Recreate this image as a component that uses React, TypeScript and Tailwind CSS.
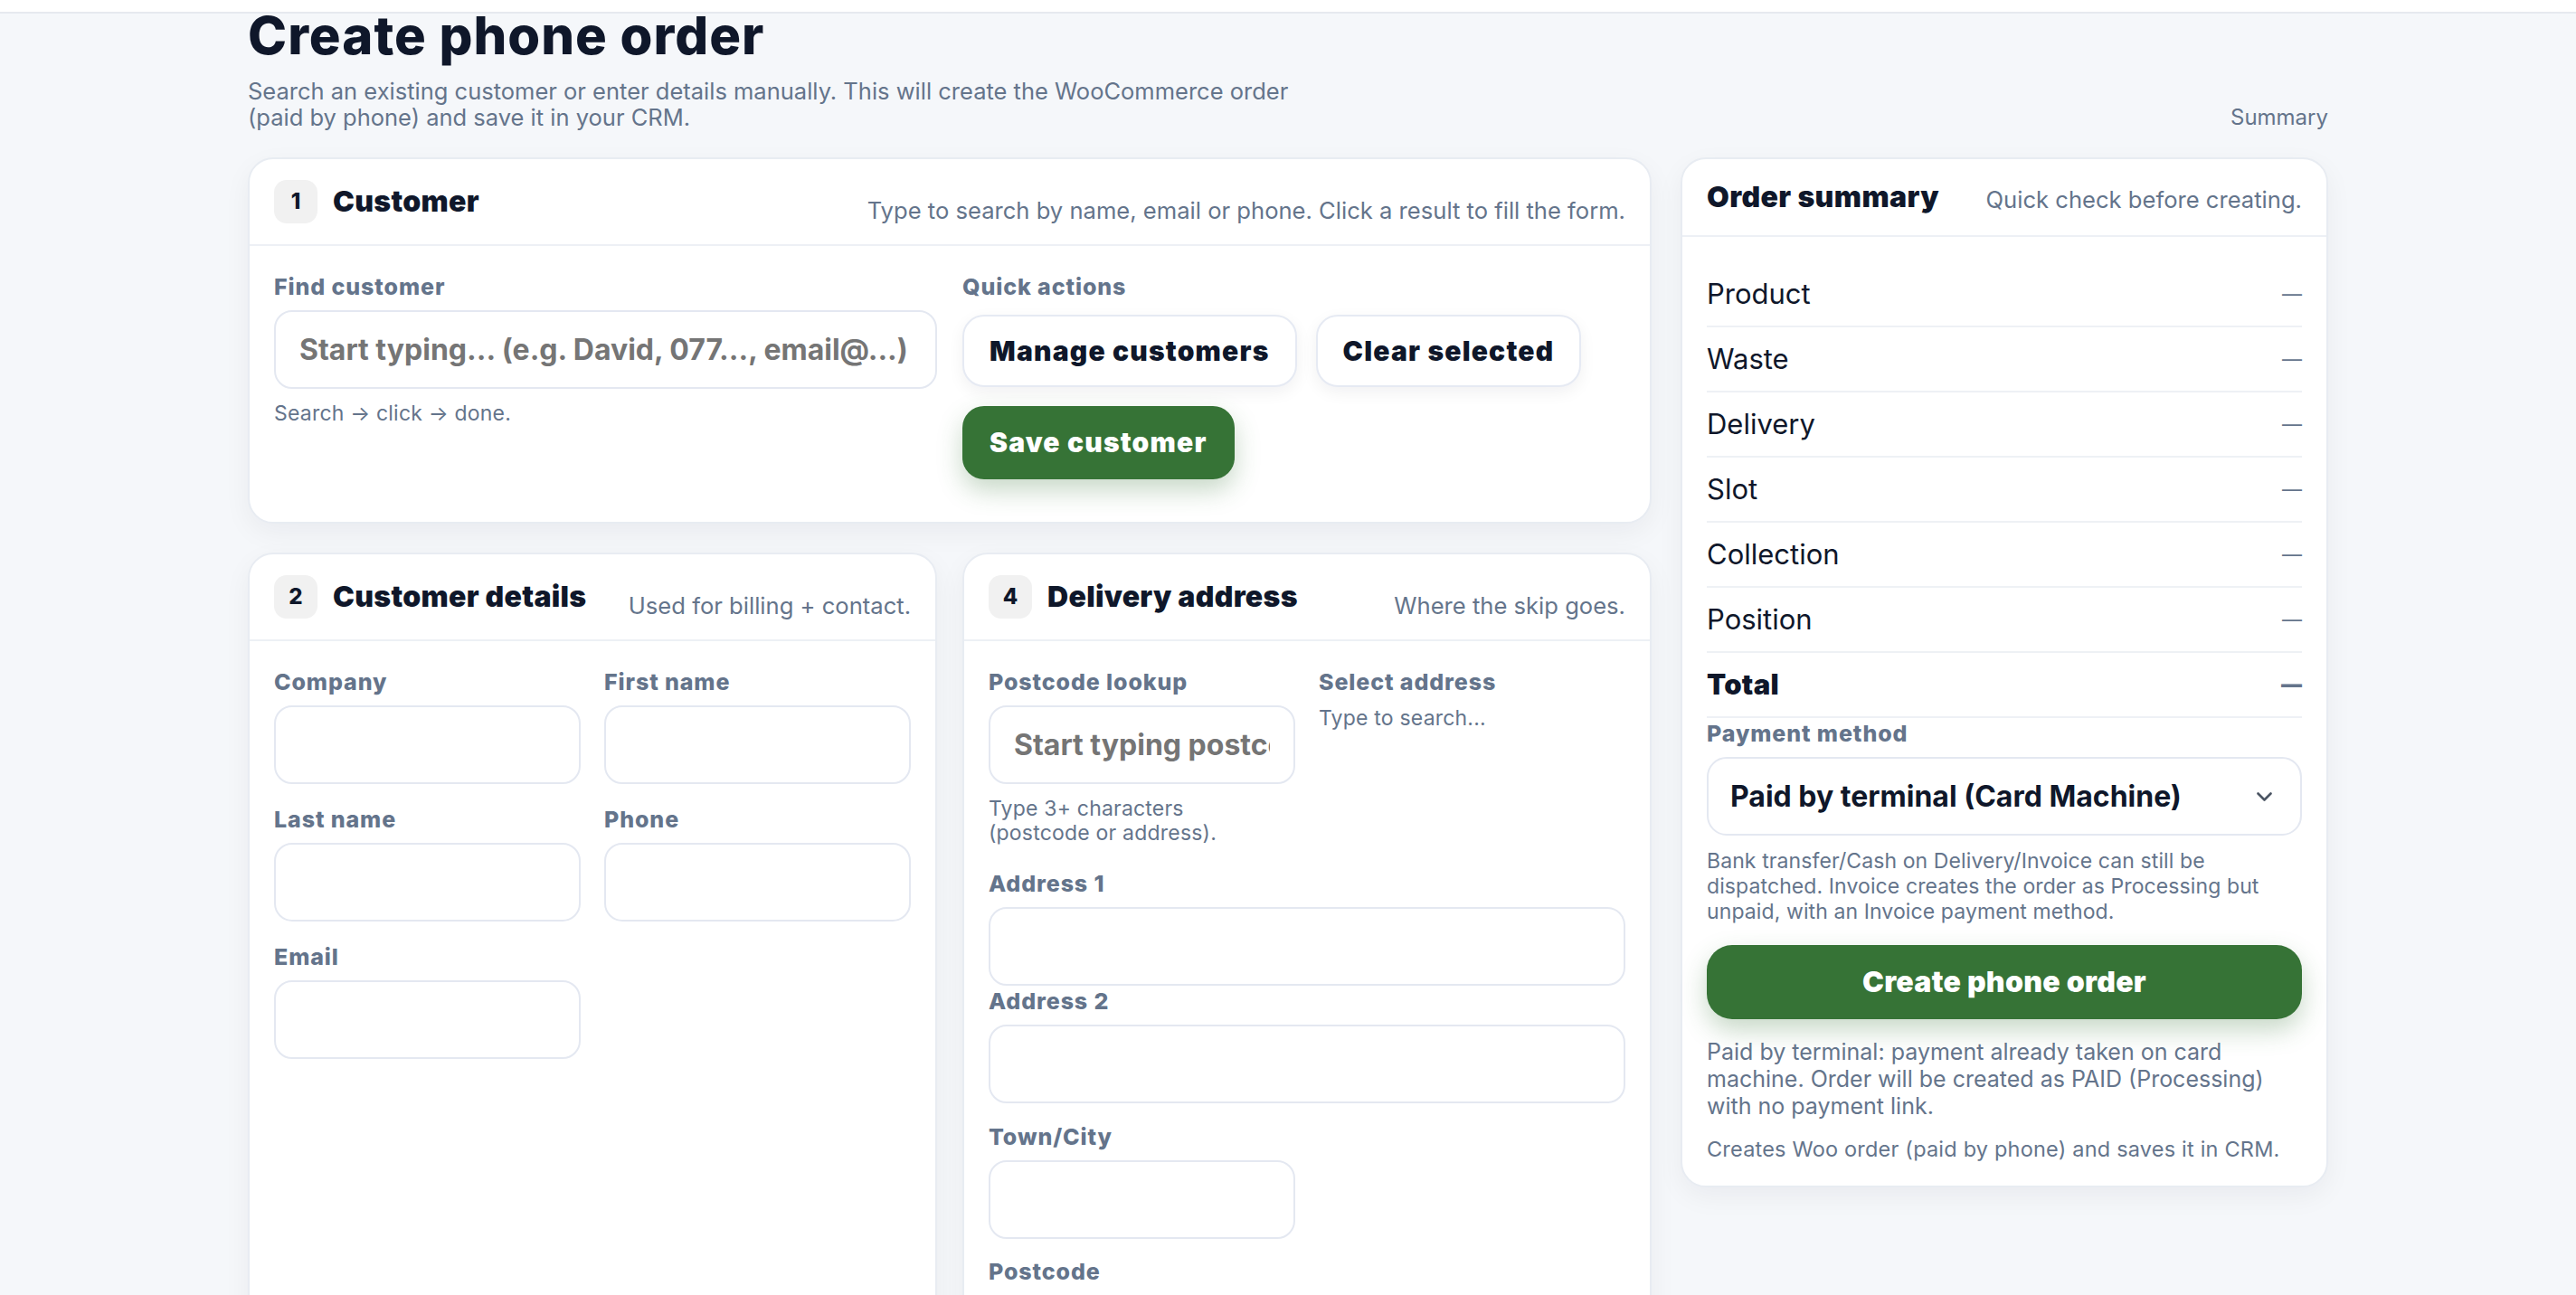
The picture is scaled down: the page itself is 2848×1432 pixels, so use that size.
import React from 'react';

interface CardHeaderProps {
    step: string;
    title: string;
    hint: string;
}

const CardHeader: React.FC<CardHeaderProps> = ({ step, title, hint }) => (
    <div className="flex items-end justify-between gap-4 border-b-2 border-[#edf0f5] px-[27px] py-[23px]">
        <div className="flex items-center gap-[17px]">
            <span className="flex h-[48px] w-[48px] items-center justify-center rounded-[14px] bg-[#f1f1f1] text-[24px] font-extrabold">
                {step}
            </span>
            <h2 className="text-[32px] font-black leading-[40px] tracking-[0.3px]">{title}</h2>
        </div>
        <p className="text-[25.6px] leading-[28px] text-[#64748b]">{hint}</p>
    </div>
);

interface FieldProps {
    label: string;
    placeholder?: string;
    className?: string;
}

const labelClass = 'block text-[25px] font-extrabold leading-[30px] tracking-[0.9px] text-[#64748b]';

const Field: React.FC<FieldProps> = ({ label, placeholder, className }) => (
    <div className={className}>
        <label className={`${labelClass} mb-[11px]`}>{label}</label>
        <input
            type="text"
            placeholder={placeholder}
            className="block h-[87px] w-full rounded-[20px] border-2 border-[#e4e8f1] bg-white px-[26px] text-[32px] font-bold text-[#0f172a] outline-none placeholder:text-[#757575]"
        />
    </div>
);

const summaryRows = ['Product', 'Waste', 'Delivery', 'Slot', 'Collection', 'Position'];

const cardClass = 'rounded-[28px] border-2 border-[#e8ecf2] bg-white shadow-[0_10px_30px_rgba(15,23,42,0.05)]';
const ghostButton =
    'h-[80px] rounded-[24px] border-2 border-[#e6eaf3] bg-white px-[28px] text-[30px] font-black tracking-[1.2px] shadow-[0_6px_18px_rgba(15,23,42,0.06)]';

export default function App() {
    return (
        <div className="min-h-screen bg-[#f5f7fa] font-['Inter',sans-serif] text-[#0f172a]">
            {/* sticky top bar, the page is scrolled a little under it */}
            <div className="fixed inset-x-0 top-0 z-10 h-[15px] border-b-2 border-[#e6e9ef] bg-white" />

            <main className="mx-auto max-w-[2300px] pt-[10px]">
                <header className="flex items-end justify-between">
                    <div>
                        <h1 className="text-[58px] font-extrabold leading-none tracking-[1px]">Create phone order</h1>
                        <p className="mt-[18px] max-w-[1190px] text-[25.5px] leading-[29px] text-[#64748b]">
                            Search an existing customer or enter details manually. This will create the WooCommerce order (paid by phone) and save it in your CRM.
                        </p>
                    </div>
                    <span className="text-[24px] leading-[29px] text-[#64748b]">Summary</span>
                </header>

                <div className="mt-[30px] grid grid-cols-[1fr_716px] items-start gap-[32px]">
                    <div className="flex flex-col gap-[32px]">
                        {/* 1 Customer */}
                        <section className={cardClass}>
                            <CardHeader
                                step="1"
                                title="Customer"
                                hint="Type to search by name, email or phone. Click a result to fill the form."
                            />
                            <div className="grid grid-cols-2 gap-x-[28px] px-[27px] pb-[47px] pt-[30px]">
                                <div>
                                    <Field label="Find customer" placeholder="Start typing... (e.g. David, 077..., email@...)" />
                                    <p className="mt-[14px] text-[23px] leading-[27px] tracking-[0.2px] text-[#64748b]">Search → click → done.</p>
                                </div>
                                <div>
                                    <label className={labelClass}>Quick actions</label>
                                    <div className="mt-[16px] flex flex-wrap gap-[21px]">
                                        <button className={ghostButton}>Manage customers</button>
                                        <button className={ghostButton}>Clear selected</button>
                                        <button className="h-[81px] rounded-[24px] bg-[#367336] px-[30px] text-[30px] font-black tracking-[1.2px] text-white shadow-[0_12px_28px_rgba(54,115,54,0.28)]">
                                            Save customer
                                        </button>
                                    </div>
                                </div>
                            </div>
                        </section>

                        <div className="grid grid-cols-2 gap-[28px]">
                            {/* 2 Customer details */}
                            <section className={cardClass}>
                                <CardHeader step="2" title="Customer details" hint="Used for billing + contact." />
                                <div className="grid grid-cols-2 gap-x-[26px] gap-y-[24px] px-[27px] pb-[28px] pt-[30px]">
                                    <Field label="Company" />
                                    <Field label="First name" />
                                    <Field label="Last name" />
                                    <Field label="Phone" />
                                    <Field label="Email" />
                                </div>
                            </section>

                            {/* 4 Delivery address */}
                            <section className={cardClass}>
                                <CardHeader step="4" title="Delivery address" hint="Where the skip goes." />
                                <div className="grid grid-cols-2 gap-x-[26px] gap-y-[24px] px-[27px] pb-[28px] pt-[30px]">
                                    <div>
                                        <Field label="Postcode lookup" placeholder="Start typing postcode or address..." />
                                        <p className="mt-[14px] pr-[24px] text-[23px] leading-[27px] tracking-[0.2px] text-[#64748b]">
                                            Type 3+ characters (postcode or address).
                                        </p>
                                    </div>
                                    <div>
                                        <label className={labelClass}>Select address</label>
                                        <p className="mt-[12px] text-[23px] leading-[27px] tracking-[0.2px] text-[#64748b]">Type to search...</p>
                                    </div>
                                    <div className="col-span-2 mt-[3px]">
                                        <Field label="Address 1" />
                                        <Field label="Address 2" className="mt-[2px]" />
                                    </div>
                                    <Field label="Town/City" className="col-start-1 -mt-[2px]" />
                                    <Field label="Postcode" className="col-start-1 -mt-[3px]" />
                                </div>
                            </section>
                        </div>
                    </div>

                    {/* Order summary */}
                    <aside className={cardClass}>
                        <div className="flex items-end justify-between border-b-2 border-[#edf0f5] px-[27px] py-[24px]">
                            <h2 className="text-[32px] font-black leading-[36px] tracking-[0.4px]">Order summary</h2>
                            <p className="text-[25.6px] leading-[30px] text-[#64748b]">Quick check before creating.</p>
                        </div>
                        <div className="px-[27px] pb-[26px] pt-[28px]">
                            {summaryRows.map((row) => (
                                <div key={row} className="flex h-[72px] items-center justify-between border-b-2 border-[#eef1f5]">
                                    <span className="text-[31px] leading-[38px]">{row}</span>
                                    <span className="text-[22px] text-[#64748b]">—</span>
                                </div>
                            ))}
                            <div className="flex h-[72px] items-center justify-between border-b-2 border-[#eef1f5]">
                                <span className="text-[31px] font-black leading-[38px] tracking-[0.3px]">Total</span>
                                <span className="text-[23px] font-black text-[#64748b]">—</span>
                            </div>

                            <label className={`${labelClass} mb-[11px] mt-[2px]`}>Payment method</label>
                            <div className="flex h-[87px] items-center justify-between rounded-[22px] border-2 border-[#e4e8f1] bg-white pl-[24px] pr-[31px]">
                                <span className="text-[32px] font-bold">Paid by terminal (Card Machine)</span>
                                <svg width="17" height="10" viewBox="0 0 17 10" fill="none" stroke="#4b5563" strokeWidth="2.6" strokeLinecap="round" strokeLinejoin="round">
                                    <polyline points="1.5 1.5 8.5 8.5 15.5 1.5" />
                                </svg>
                            </div>
                            <p className="mt-[14px] text-[23px] leading-[28px] tracking-[0.1px] text-[#64748b]">
                                Bank transfer/Cash on Delivery/Invoice can still be dispatched. Invoice creates the order as Processing but unpaid, with an Invoice payment method.
                            </p>

                            <button className="mt-[23px] h-[82px] w-full rounded-[28px] bg-[#367336] text-[32px] font-black tracking-[0.3px] text-white shadow-[0_12px_28px_rgba(54,115,54,0.28)]">
                                Create phone order
                            </button>

                            <p className="mt-[21px] text-[25px] leading-[30px] text-[#64748b]">
                                Paid by terminal: payment already taken on card machine. Order will be created as PAID (Processing) with no payment link.
                            </p>
                            <p className="mt-[19px] text-[23.5px] leading-[28px] tracking-[0.2px] text-[#64748b]">
                                Creates Woo order (paid by phone) and saves it in CRM.
                            </p>
                        </div>
                    </aside>
                </div>
            </main>
        </div>
    );
}
